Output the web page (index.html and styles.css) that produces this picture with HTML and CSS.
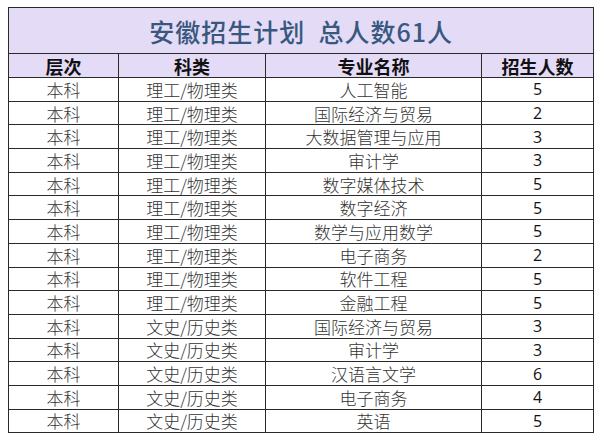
FILE: index.html
```html
<!DOCTYPE html>
<html lang="zh">
<head>
<meta charset="utf-8">
<link rel="stylesheet" href="styles.css">
</head>
<body>
<table class="plan">
<colgroup><col class="c1"><col class="c2"><col class="c3"><col class="c4"></colgroup>
<thead>
<tr class="title"><th colspan="4">安徽招生计划&nbsp; 总人数61人</th></tr>
<tr class="head"><th>层次</th><th>科类</th><th>专业名称</th><th>招生人数</th></tr>
</thead>
<tbody>
<tr><td>本科</td><td>理工/物理类</td><td>人工智能</td><td class="n">5</td></tr>
<tr><td>本科</td><td>理工/物理类</td><td>国际经济与贸易</td><td class="n">2</td></tr>
<tr><td>本科</td><td>理工/物理类</td><td>大数据管理与应用</td><td class="n">3</td></tr>
<tr><td>本科</td><td>理工/物理类</td><td>审计学</td><td class="n">3</td></tr>
<tr><td>本科</td><td>理工/物理类</td><td>数字媒体技术</td><td class="n">5</td></tr>
<tr><td>本科</td><td>理工/物理类</td><td>数字经济</td><td class="n">5</td></tr>
<tr><td>本科</td><td>理工/物理类</td><td>数学与应用数学</td><td class="n">5</td></tr>
<tr><td>本科</td><td>理工/物理类</td><td>电子商务</td><td class="n">2</td></tr>
<tr><td>本科</td><td>理工/物理类</td><td>软件工程</td><td class="n">5</td></tr>
<tr><td>本科</td><td>理工/物理类</td><td>金融工程</td><td class="n">5</td></tr>
<tr><td>本科</td><td>文史/历史类</td><td>国际经济与贸易</td><td class="n">3</td></tr>
<tr><td>本科</td><td>文史/历史类</td><td>审计学</td><td class="n">3</td></tr>
<tr><td>本科</td><td>文史/历史类</td><td>汉语言文学</td><td class="n">6</td></tr>
<tr><td>本科</td><td>文史/历史类</td><td>电子商务</td><td class="n">4</td></tr>
<tr><td>本科</td><td>文史/历史类</td><td>英语</td><td class="n">5</td></tr>
</tbody>
</table>
</body>
</html>
```
FILE: styles.css
```css
html, body { margin: 0; padding: 0; background: #fff; }
body { padding: 7px 0 0 8px; }
.plan {
  border-collapse: collapse;
  table-layout: fixed;
  width: 585px;
  font-family: "Noto Sans CJK SC", "Noto Sans", sans-serif;
  color: #222;
}
.c1 { width: 110px; }
.c2 { width: 147px; }
.c3 { width: 216px; }
.c4 { width: 112px; }
.plan th, .plan td {
  border: 1.5px solid #2a2a2a;
  padding: 0;
  text-align: center;
  line-height: 1;
}
.plan tr { height: 23.7px; }
.plan tr.title { height: 46px; }
.plan tr.head { height: 24px; }
.title th {
  background: #e4dbf6;
  color: #38587f;
  font-size: 25px;
  font-weight: 500;
  letter-spacing: 1px;
  padding-top: 1px;
}
.head th {
  background: #e4dbf6;
  color: #111;
  font-size: 18px;
  font-weight: 700;
}
.plan td {
  font-size: 17px;
  font-weight: 300;
  color: #333;
}
.plan td.n {
  font-family: "Open Sans", "Noto Sans", sans-serif;
  font-weight: 400;
  color: #111;
  font-size: 16px;
}
```
